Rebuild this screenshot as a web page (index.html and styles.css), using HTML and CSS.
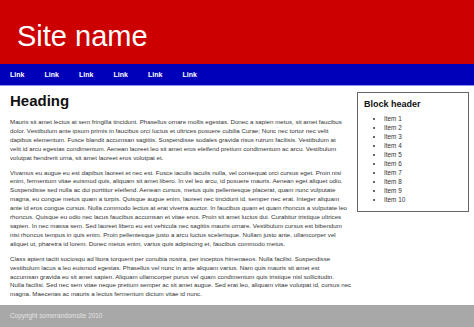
FILE: index.html
```html
<!DOCTYPE html>
<html lang="en">
<head>
    <meta charset="UTF-8">
    <meta name="viewport" content="width=device-width, initial-scale=1.0">
    <title>Site name</title>
    <link rel="stylesheet" href="styles.css">
</head>
<body>
    <div class="header">
        <h1 class="site-name">Site name</h1>
    </div>
    <div class="nav">
        <a href="#">Link</a>
        <a href="#">Link</a>
        <a href="#">Link</a>
        <a href="#">Link</a>
        <a href="#">Link</a>
        <a href="#">Link</a>
    </div>

    <div class="page">
        <div class="content">
            <h2>Heading</h2>
            <p>Mauris sit amet lectus at sem fringilla tincidunt. Phasellus ornare mollis egestas. Donec a sapien metus, sit amet faucibus<br>
            dolor. Vestibulum ante ipsum primis in faucibus orci luctus et ultrices posuere cubilia Curae; Nunc nec tortor nec velit<br>
            dapibus elementum. Fusce blandit accumsan sagittis. Suspendisse sodales gravida risus rutrum facilisis. Vestibulum at<br>
            velit id arcu egestas condimentum. Aenean laoreet leo sit amet eros eleifend pretium condimentum ac arcu. Vestibulum<br>
            volutpat hendrerit urna, sit amet laoreet eros volutpat et.</p>
            <p>Vivamus eu augue eu est dapibus laoreet et nec est. Fusce iaculis iaculis nulla, vel consequat orci cursus eget. Proin nisi<br>
            enim, fermentum vitae euismod quis, aliquam sit amet libero. In vel leo arcu, id posuere mauris. Aenean eget aliquet odio.<br>
            Suspendisse sed nulla ac dui porttitor eleifend. Aenean cursus, metus quis pellentesque placerat, quam nunc vulputate<br>
            magna, eu congue metus quam a turpis. Quisque augue enim, laoreet nec tincidunt id, semper nec erat. Integer aliquam<br>
            ante id eros congue cursus. Nulla commodo lectus at erat viverra auctor. In faucibus quam et quam rhoncus a vulputate leo<br>
            rhoncus. Quisque eu odio nec lacus faucibus accumsan et vitae eros. Proin sit amet luctus dui. Curabitur tristique ultrices<br>
            sapien. In nec massa sem. Sed laoreet libero eu est vehicula nec sagittis mauris ornare. Vestibulum cursus est bibendum<br>
            nisi rhoncus tempus in quis enim. Proin pellentesque justo a arcu luctus scelerisque. Nullam justo ante, ullamcorper vel<br>
            aliquet ut, pharetra id lorem. Donec metus enim, varius quis adipiscing et, faucibus commodo metus.</p>
            <p>Class aptent taciti sociosqu ad litora torquent per conubia nostra, per inceptos himenaeos. Nulla facilisi. Suspendisse<br>
            vestibulum lacus a leo euismod egestas. Phasellus vel nunc in ante aliquam varius. Nam quis mauris sit amet est<br>
            accumsan gravida eu sit amet sapien. Aliquam ullamcorper purus vel quam condimentum quis tristique nisl sollicitudin.<br>
            Nulla facilisi. Sed nec sem vitae neque pretium semper ac sit amet augue. Sed erat leo, aliquam vitae volutpat id, cursus nec<br>
            magna. Maecenas ac mauris a lectus fermentum dictum vitae id nunc.</p>
        </div>

        <div class="sidebar">
            <div class="block">
                <h3>Block header</h3>
                <ul>
                    <li>Item 1</li>
                    <li>Item 2</li>
                    <li>Item 3</li>
                    <li>Item 4</li>
                    <li>Item 5</li>
                    <li>Item 6</li>
                    <li>Item 7</li>
                    <li>Item 8</li>
                    <li>Item 9</li>
                    <li>Item 10</li>
                </ul>
            </div>
        </div>
    </div>

    <div class="footer">Copyright somerandomsite 2010</div>
</body>
</html>
```

FILE: styles.css
```css
body, html {
    margin: 0;
    padding: 0;
    background: #fff;
    font-family: "Liberation Sans", Arial, sans-serif;
    color: #333;
}

/* Header */
.header {
    background: #cc0000;
    height: 44px;
    padding: 20px 0 0 17px;
}

.site-name {
    margin: 0;
    color: #fff;
    font-weight: normal;
    font-size: 29px;
    line-height: 33px;
}

/* Navigation */
.nav {
    background: #0000bb;
    height: 21px;
    border-bottom: 1px solid #8c8cf0;
    display: flex;
    align-items: center;
    padding-left: 10px;
}

.nav a {
    color: #fff;
    text-decoration: none;
    font-weight: bold;
    font-size: 7px;
    width: 34.5px;
}

/* Main area */
.page {
    display: flex;
    align-items: flex-start;
}

.content {
    width: 340px;
    padding-left: 10px;
}

.content h2 {
    margin: 6px 0 9px;
    font-size: 15px;
    line-height: 17px;
    color: #111;
}

.content p {
    font-size: 6.2px;
    line-height: 8.9px;
    margin: 0 0 6px;
    white-space: nowrap;
}

/* Sidebar */
.sidebar {
    margin-left: 7px;
    padding-top: 6px;
}

.block {
    width: 110px;
    height: 118px;
    border: 1px solid #666;
}

.block h3 {
    margin: 6px 0 5px 6px;
    font-size: 9px;
    color: #111;
}

.block ul {
    margin: 0;
    padding-left: 26px;
    font-size: 6.4px;
    line-height: 9px;
}

/* Footer */
.footer {
    background: #a8a8a8;
    color: #e2e2e2;
    font-size: 6.4px;
    height: 22px;
    line-height: 22px;
    padding-left: 10px;
}
```
